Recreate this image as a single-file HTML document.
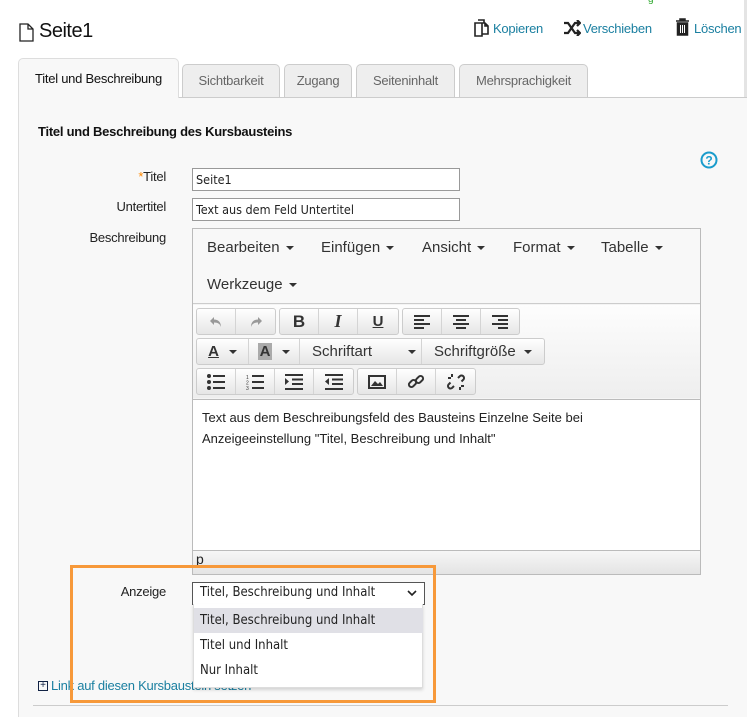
<!DOCTYPE html>
<html><head><meta charset="utf-8"><style>
*{box-sizing:border-box}
body{margin:0;width:747px;height:717px;overflow:hidden;background:#fff;font-family:"Liberation Sans",Arial,sans-serif;font-size:13px;color:#222;position:relative}
.a{position:absolute}
.n{letter-spacing:-0.25px}
.tab{position:absolute;top:64px;height:33px;border:1px solid #ccc;border-bottom:none;border-radius:5px 5px 0 0;background:#eee;color:#666;font-size:13px;text-align:center;line-height:31px}
.lbl{position:absolute;right:581px;font-size:13px;color:#222}
.inp{position:absolute;left:192px;width:268px;height:23px;border:1px solid #999;background:#fff;padding:3px 3px;font-family:"DejaVu Sans Condensed","Liberation Sans",sans-serif;font-size:12.5px}
.mb{position:absolute;font-size:15px;color:#333}
.car{display:inline-block;border-left:4px solid transparent;border-right:4px solid transparent;border-top:4px solid #333;vertical-align:middle;margin-left:6px}
.grp{position:absolute;height:27px;border:1px solid #ccc;border-radius:3px;background:linear-gradient(#fff,#e6e6e6)}
.b{position:absolute;top:0;height:25px;border-right:1px solid #d4d4d4;text-align:center;line-height:25px;font-size:15px;color:#333}
.b svg{position:absolute;left:50%;top:50%;transform:translate(-50%,-50%)}
.it{position:absolute;left:0;width:229px;height:25px;padding-left:6px;line-height:25px;font-family:"DejaVu Sans Condensed","Liberation Sans",sans-serif;font-size:13px;color:#222}
</style></head><body>
<div class="a" style="left:648px;top:-6px;color:#3a3;font-size:10px">g</div>
<svg class="a" style="left:19px;top:23px" width="15" height="19" viewBox="0 0 15 19"><path d="M1 1h8l5 5v12H1z M9 1v5h5" fill="none" stroke="#222" stroke-width="1.3"/></svg>
<div class="a" style="left:39px;top:20px;font-size:20px;color:#111;letter-spacing:-0.5px">Seite1</div>
<svg class="a" style="left:474px;top:19px" width="18" height="18" viewBox="0 0 18 18"><path d="M4 1h6v3M1 4h7v13H1z M8 4h3l3 3v8H8 M11 4v3h3" fill="none" stroke="#222" stroke-width="1.6"/></svg>
<div class="a n" style="left:493px;top:21px;color:#1a7fa0;font-size:13px">Kopieren</div>
<svg class="a" style="left:563px;top:20px" width="18" height="16" viewBox="0 0 18 16"><path d="M1 3h4l7 10h4M1 13h4l7-10h4M14 0l3 3-3 3M14 10l3 3-3 3" fill="none" stroke="#222" stroke-width="2.2"/></svg>
<div class="a n" style="left:583px;top:21px;color:#1a7fa0;font-size:13px">Verschieben</div>
<svg class="a" style="left:675px;top:18px" width="15" height="18" viewBox="0 0 15 18"><path d="M1 3h13M5 3V1h5v2M2.5 5h10v12h-10z" fill="#222" stroke="#222" stroke-width="1.5"/><path d="M5.5 7v8M7.5 7v8M9.5 7v8" stroke="#fff" stroke-width="1"/></svg>
<div class="a n" style="left:694px;top:21px;color:#1a7fa0;font-size:13px">Löschen</div>
<div class="a" style="left:744px;top:0;width:3px;height:717px;background:#e4e4e4"></div>
<div class="a" style="left:18px;top:97px;width:729px;height:620px;background:#f8f8f8;border-top:1px solid #ccc;border-left:1px solid #ddd"></div>
<div class="tab n" style="left:18px;top:58px;width:161px;height:40px;background:#f8f8f8;color:#111;line-height:40px;border-color:#ddd">Titel und Beschreibung</div>
<div class="tab n" style="left:182px;width:98px">Sichtbarkeit</div>
<div class="tab n" style="left:284px;width:68px">Zugang</div>
<div class="tab n" style="left:356px;width:99px">Seiteninhalt</div>
<div class="tab n" style="left:459px;width:129px">Mehrsprachigkeit</div>
<div class="a n" style="left:38px;top:124px;font-weight:bold;font-size:13px;color:#111">Titel und Beschreibung des Kursbausteins</div>
<svg class="a" style="left:700px;top:151px" width="18" height="18" viewBox="0 0 18 18"><circle cx="9" cy="9" r="7.5" fill="none" stroke="#1a9ccc" stroke-width="2"/><text x="9" y="13.5" font-size="12" font-weight="bold" text-anchor="middle" fill="#1a9ccc" font-family="Liberation Sans">?</text></svg>
<div class="lbl n" style="top:169px"><span style="color:#f80">*</span>Titel</div>
<div class="lbl n" style="top:199px">Untertitel</div>
<div class="lbl n" style="top:230px">Beschreibung</div>
<div class="inp" style="top:168px">Seite1</div>
<div class="inp" style="top:198px">Text aus dem Feld Untertitel</div>
<div class="a" style="left:192px;top:228px;width:509px;height:347px;border:1px solid #bbb;background:#f4f4f4">
 <div class="a" style="left:0;top:0;width:507px;height:75px;background:#f8f8f8;border-bottom:1px solid #ccc"></div>
 <div class="mb" style="left:14px;top:10px">Bearbeiten<span class="car"></span></div>
 <div class="mb" style="left:128px;top:10px">Einfügen<span class="car"></span></div>
 <div class="mb" style="left:229px;top:10px">Ansicht<span class="car"></span></div>
 <div class="mb" style="left:320px;top:10px">Format<span class="car"></span></div>
 <div class="mb" style="left:408px;top:10px">Tabelle<span class="car"></span></div>
 <div class="mb" style="left:14px;top:47px">Werkzeuge<span class="car"></span></div>
 <div class="a" style="left:0;top:76px;width:507px;height:93px;background:linear-gradient(#fdfdfd,#eee)"></div>
 <div class="grp" style="left:3px;top:79px;width:80px">
  <div class="b" style="left:0;width:39px"><svg width="14" height="12" viewBox="0 0 14 12"><path d="M5 1L1 5l4 4V6.5c4 0 6 1.5 7 4.5 0-5-3-7.5-7-7.5z" fill="#999"/></svg></div>
  <div class="b" style="left:39px;width:39px;border:none"><svg width="14" height="12" viewBox="0 0 14 12"><path d="M9 1l4 4-4 4V6.5c-4 0-6 1.5-7 4.5 0-5 3-7.5 7-7.5z" fill="#999"/></svg></div></div>
 <div class="grp" style="left:86px;top:79px;width:120px"><div class="b" style="left:0;width:39px;font-weight:bold;font-size:17px">B</div><div class="b" style="left:39px;width:39px;font-style:italic;font-weight:bold;font-family:'Liberation Serif';font-size:18px">I</div><div class="b" style="left:78px;width:40px;border:none;text-decoration:underline;font-weight:bold">U</div></div>
 <div class="grp" style="left:209px;top:79px;width:118px">
  <div class="b" style="left:0;width:39px"><svg width="16" height="14" viewBox="0 0 16 14"><path d="M0 1h16M0 5h10M0 9h16M0 13h10" stroke="#333" stroke-width="2"/></svg></div>
  <div class="b" style="left:39px;width:39px"><svg width="16" height="14" viewBox="0 0 16 14"><path d="M0 1h16M3 5h10M0 9h16M3 13h10" stroke="#333" stroke-width="2"/></svg></div>
  <div class="b" style="left:78px;width:38px;border:none"><svg width="16" height="14" viewBox="0 0 16 14"><path d="M0 1h16M6 5h10M0 9h16M6 13h10" stroke="#333" stroke-width="2"/></svg></div></div>
 <div class="grp" style="left:3px;top:109px;width:349px">
  <div class="b" style="left:0;width:52px"><span style="text-decoration:underline;font-weight:bold">A</span><span class="car" style="margin-left:10px"></span></div>
  <div class="b" style="left:52px;width:51px"><span style="background:#aaa;font-weight:bold;padding:0 2px">A</span><span class="car" style="margin-left:10px"></span></div>
  <div class="b" style="left:103px;width:122px;text-align:left;padding-left:12px">Schriftart<span class="car" style="margin-left:36px"></span></div>
  <div class="b" style="left:225px;width:122px;text-align:left;padding-left:12px;border:none">Schriftgröße<span class="car" style="margin-left:8px"></span></div>
 </div>
 <div class="grp" style="left:3px;top:139px;width:158px">
  <div class="b" style="left:0;width:39px"><svg width="18" height="16" viewBox="0 0 18 16"><circle cx="2" cy="2" r="2" fill="#333"/><circle cx="2" cy="8" r="2" fill="#333"/><circle cx="2" cy="14" r="2" fill="#333"/><path d="M6 2h12M6 8h12M6 14h12" stroke="#333" stroke-width="2"/></svg></div>
  <div class="b" style="left:39px;width:39px"><svg width="18" height="16" viewBox="0 0 18 16"><text x="0" y="5" font-size="5" fill="#333">1</text><text x="0" y="10.5" font-size="5" fill="#333">2</text><text x="0" y="16" font-size="5" fill="#333">3</text><path d="M6 2h12M6 8h12M6 14h12" stroke="#333" stroke-width="2"/></svg></div>
  <div class="b" style="left:78px;width:39px"><svg width="18" height="16" viewBox="0 0 18 16"><path d="M0 1h18M7 5.5h11M7 10h11M0 15h18" stroke="#333" stroke-width="2"/><path d="M0 4l4 3.5-4 3.5z" fill="#333"/></svg></div>
  <div class="b" style="left:117px;width:39px;border:none"><svg width="18" height="16" viewBox="0 0 18 16"><path d="M0 1h18M7 5.5h11M7 10h11M0 15h18" stroke="#333" stroke-width="2"/><path d="M4 4L0 7.5 4 11z" fill="#333"/></svg></div></div>
 <div class="grp" style="left:164px;top:139px;width:119px">
  <div class="b" style="left:0;width:39px"><svg width="18" height="14" viewBox="0 0 18 14"><rect x="1" y="1" width="16" height="12" fill="none" stroke="#333" stroke-width="2"/><path d="M3 11l4-5 3 3 2-2 3 4z" fill="#333"/></svg></div>
  <div class="b" style="left:39px;width:39px"><svg width="18" height="18" viewBox="0 0 18 18"><rect x="1.5" y="8" width="8" height="5" rx="2.5" transform="rotate(-45 5.5 10.5)" fill="none" stroke="#333" stroke-width="2"/><rect x="8.5" y="4" width="8" height="5" rx="2.5" transform="rotate(-45 12.5 6.5)" fill="none" stroke="#333" stroke-width="2"/></svg></div>
  <div class="b" style="left:78px;width:39px;border:none"><svg width="18" height="18" viewBox="0 0 18 18"><path d="M7 13l-2 2a2.5 2.5 0 01-3.5-3.5l2-2M11 5l2-2a2.5 2.5 0 013.5 3.5l-2 2M1 5h3M5 1v3M13 14v3M14 13h3" fill="none" stroke="#333" stroke-width="2"/></svg></div></div>
 <div class="a" style="left:0;top:170px;width:507px;height:152px;background:#fff;border-top:1px solid #bbb;border-bottom:1px solid #bbb;padding:7px 9px;font-size:13px;line-height:21px;color:#222">Text aus dem Beschreibungsfeld des Bausteins Einzelne Seite bei Anzeigeeinstellung "Titel, Beschreibung und Inhalt"</div>
 <div class="a" style="left:0;top:322px;width:507px;height:23px;background:linear-gradient(#f6f6f6,#e4e4e4)"></div>
 <div class="a" style="left:3px;top:322px;font-size:14px">p</div>
</div>
<div class="lbl n" style="top:584px">Anzeige</div>
<div class="a" style="left:192px;top:582px;width:233px;height:23px;border:1px solid #555;background:#fff;padding:2px 7px;font-family:'DejaVu Sans Condensed','Liberation Sans',sans-serif;font-size:13px">Titel, Beschreibung und Inhalt<svg style="position:absolute;right:7px;top:7px" width="10" height="7" viewBox="0 0 10 7"><path d="M1 1l4 4 4-4" fill="none" stroke="#222" stroke-width="1.6"/></svg></div>
<div class="a" style="left:38px;top:681px;width:10px;height:10px;border:1px solid #124;font-size:10px;line-height:8px;text-align:center;color:#124">+</div>
<div class="a n" style="left:51px;top:678px;color:#1a7fa0;font-size:13px">Link auf diesen Kursbaustein setzen</div>
<div class="a" style="left:193px;top:604px;width:230px;height:84px;background:#fff;border:1px solid #ddd;border-top:none;z-index:1;box-shadow:0 2px 3px rgba(0,0,0,.15)">
 <div class="it" style="top:4px;background:#e0e0e6">Titel, Beschreibung und Inhalt</div>
 <div class="it" style="top:29px">Titel und Inhalt</div>
 <div class="it" style="top:54px">Nur Inhalt</div>
</div>
<div class="a" style="left:33px;top:705px;width:695px;height:1px;background:#ccc"></div>
<div class="a" style="left:70px;top:565px;width:366px;height:138px;border:3px solid #f7993a;z-index:2"></div>
</body></html>
